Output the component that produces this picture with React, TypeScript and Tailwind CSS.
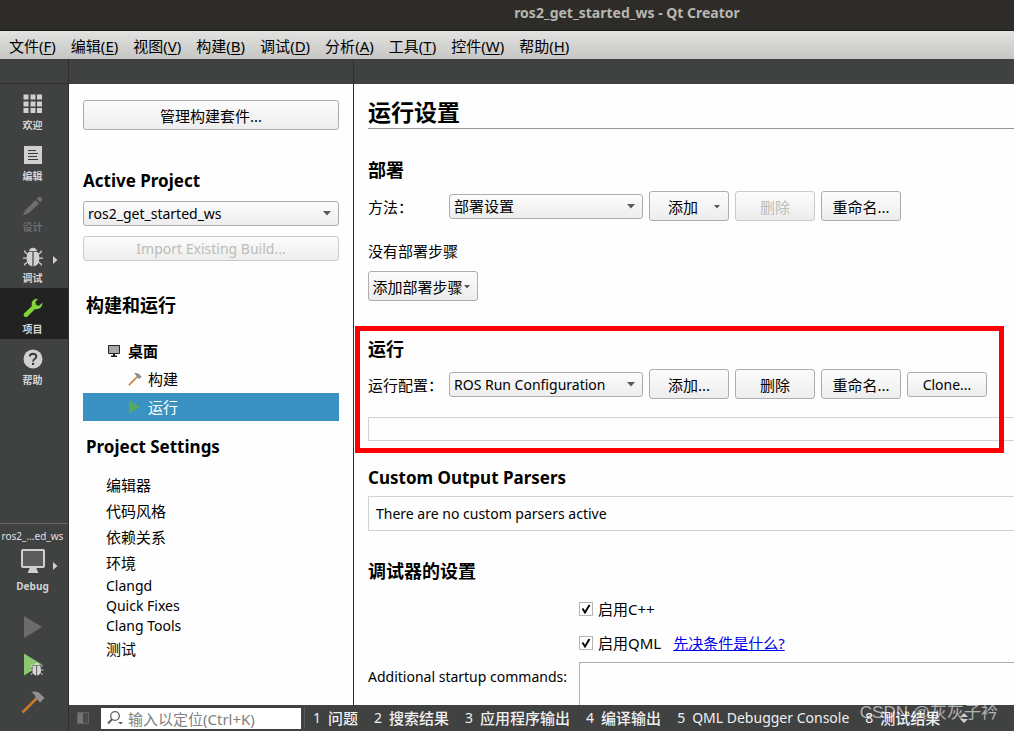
import type { ReactNode } from "react";

const MENUS: [string, string][] = [
  ["文件", "F"],
  ["编辑", "E"],
  ["视图", "V"],
  ["构建", "B"],
  ["调试", "D"],
  ["分析", "A"],
  ["工具", "T"],
  ["控件", "W"],
  ["帮助", "H"],
];

const OUTPUT_PANES: [string, string][] = [
  ["1", "问题"],
  ["2", "搜索结果"],
  ["3", "应用程序输出"],
  ["4", "编译输出"],
  ["5", "QML Debugger Console"],
  ["8", "测试结果"],
];

const CJK_SETTINGS = ["编辑器", "代码风格", "依赖关系", "环境"];
const LATIN_SETTINGS = ["Clangd", "Quick Fixes", "Clang Tools"];

function GridIcon() {
  const cells = [0.5, 7.5, 14];
  return (
    <svg width="20" height="20" viewBox="0 0 20 20" fill="#d0d0d0" aria-hidden="true">
      {cells.map((y) => cells.map((x) => <rect key={`${x}-${y}`} x={x} y={y} width="5" height="5" />))}
    </svg>
  );
}

function EditIcon() {
  return (
    <svg width="20" height="20" viewBox="0 0 20 20" aria-hidden="true">
      <rect x="1" y="1" width="18" height="18" fill="#d0d0d0" />
      <path d="M5 5.5h8M5 8.5h10M5 11.5h9M5 14.5h10" stroke="#3a3a3a" strokeWidth="1.2" />
    </svg>
  );
}

function PencilIcon() {
  return (
    <svg width="20" height="20" viewBox="0 0 20 20" fill="#6e6e6e" aria-hidden="true">
      <path d="M0 19.5l2.2-5.2L12.6 4l3.4 3.4L5.4 17.6z" />
      <path d="M13.7 2.9l1.9-1.9q1-.8 2 0l1.4 1.4q.8 1 0 2l-1.9 1.9z" />
    </svg>
  );
}

function BugShape() {
  return (
    <>
      <path d="M6 4.200Q6.500.7 10 .7t4 3.500z" />
      <path d="M9.400 5v14.500Q3.600 18 3.600 11.500 3.600 7.500 5.500 5zM10.600 5v14.500q5.800-1.500 5.800-8 0-4-1.900-6.500z" />
      <path
        d="M4.800 7.500L1.800 5V3.500M15.200 7.500l3-2.500V3.500M4 11.200H0M16 11.200h4M4.800 15l-3 2v1.500M15.200 15l3 2v1.500"
        stroke="currentColor"
        strokeWidth="1.300"
        fill="none"
      />
    </>
  );
}

function BugIcon() {
  return (
    <svg width="20" height="20" viewBox="0 0 20 20" className="text-[#d0d0d0]" fill="currentColor" aria-hidden="true">
      <BugShape />
    </svg>
  );
}

function WrenchIcon() {
  return (
    <svg width="20" height="20" viewBox="0 0 20 20" aria-hidden="true">
      <path
        d="M14.800.9Q11.300.5 9.400 3.200 8.100 5.300 9 8L1.300 15.200q-1.400 1.600 0 3.200 1.700 1.400 3.300 0L12 10.900q3 .8 5.200-.8Q19.800 8 19.200 4.800L16 7.700l-2.800-.8L12.300 4z"
        fill="#80d43c"
      />
    </svg>
  );
}

function HelpIcon() {
  return (
    <svg width="20" height="20" viewBox="0 0 20 20" aria-hidden="true">
      <circle cx="10" cy="10" r="9.500" fill="#d0d0d0" />
      <path d="M6.800 7.400Q7 4.700 10.100 4.700q3.100.1 3.200 2.700 0 1.500-1.700 2.600Q10.100 11 10.100 12.500" fill="none" stroke="#3c3c3c" strokeWidth="2" />
      <rect x="9" y="13.800" width="2.200" height="2.200" fill="#3c3c3c" />
    </svg>
  );
}

function FlyoutArrow() {
  return (
    <svg width="5" height="8" viewBox="0 0 5 8" fill="#d0d0d0" aria-hidden="true">
      <path d="M0 0l4.500 4L0 8z" />
    </svg>
  );
}

function HammerIcon({ size }: { size: number }) {
  return (
    <svg width={size} height={size} viewBox="0 0 24 24" aria-hidden="true">
      <path d="M1.500 22.500L15.500 8.500" stroke="#c87828" strokeWidth="2.600" />
      <path d="M10 2Q14 .8 18 2.500l5.500 5.500-4.500 4.500-4.500-5Q14 4 10 2z" fill="#8f9090" />
    </svg>
  );
}

function MonitorIcon() {
  return (
    <svg width="26" height="26" viewBox="0 0 26 26" aria-hidden="true">
      <rect x="2" y="2" width="22" height="17" rx="1" fill="#5b5c5c" stroke="#d0d0d0" strokeWidth="2" />
      <path d="M10 19.500h6l2.500 5.500h-11z" fill="#d0d0d0" />
    </svg>
  );
}

function DropMark() {
  return (
    <svg width="8" height="5" viewBox="0 0 8 5" fill="#5a5a5a" aria-hidden="true">
      <path d="M0 0h8L4 4.500z" />
    </svg>
  );
}

function SmallDropMark() {
  return (
    <svg width="6" height="4" viewBox="0 0 6 4" fill="#5a5a5a" aria-hidden="true">
      <path d="M0 0h6L3 3.500z" />
    </svg>
  );
}

function ModeButton({
  label,
  icon,
  active,
  disabled,
  flyout,
}: {
  label: string;
  icon: ReactNode;
  active?: boolean;
  disabled?: boolean;
  flyout?: boolean;
}) {
  return (
    <button
      type="button"
      disabled={disabled}
      className={`relative flex h-[51px] w-full flex-col items-center gap-[3px] pt-[10px] pr-[3px] text-[10px] leading-4 font-bold ${
        active ? "bg-[#222222]" : ""
      } ${disabled ? "text-[#6e6e6e]" : "text-[#d4d4d4]"}`}
    >
      {icon}
      {label}
      {flyout && (
        <span className="absolute top-[19px] right-[10px]">
          <FlyoutArrow />
        </span>
      )}
    </button>
  );
}

function PushButton({
  children,
  className,
  disabled,
}: {
  children: ReactNode;
  className: string;
  disabled?: boolean;
}) {
  return (
    <button
      type="button"
      disabled={disabled}
      className={`flex shrink-0 items-center justify-center rounded-[3px] border bg-linear-to-b from-[#fcfcfc] to-[#ededed] ${
        disabled ? "border-[#cacaca] text-[#bcbcb8]" : "border-[#adadad] text-black"
      } ${className}`}
    >
      {children}
    </button>
  );
}

function Combo({ id, label, value, className }: { id: string; label?: string; value: string; className: string }) {
  return (
    <div className={`grid shrink-0 items-center ${className}`}>
      <select
        id={id}
        aria-label={label}
        className="col-start-1 row-start-1 h-[25px] w-full appearance-none rounded-[3px] border border-[#adadad] bg-linear-to-b from-[#fcfcfc] to-[#ededed] pr-5 pl-1 text-black"
      >
        <option>{value}</option>
      </select>
      <span className="pointer-events-none col-start-1 row-start-1 justify-self-end pr-2">
        <DropMark />
      </span>
    </div>
  );
}

function Check({ id, label }: { id: string; label: string }) {
  return (
    <div className="flex items-center gap-[5px]">
      <span className="grid items-center justify-items-center">
        <input
          id={id}
          type="checkbox"
          defaultChecked
          className="peer col-start-1 row-start-1 size-[14px] appearance-none border border-[#b4b4b4] bg-white"
        />
        <svg
          width="10"
          height="10"
          viewBox="0 0 10 10"
          className="pointer-events-none invisible col-start-1 row-start-1 peer-checked:visible"
          aria-hidden="true"
        >
          <path d="M1.500 4.500L4 8.500 8.500 1" fill="none" stroke="#000" strokeWidth="1.900" />
        </svg>
      </span>
      <label htmlFor={id} className="text-[15px]">
        {label}
      </label>
    </div>
  );
}

function ModeBar() {
  return (
    <nav aria-label="Modes" className="flex w-[69px] shrink-0 flex-col border-r border-[#2e2e2e] bg-[#404141]">
      <div className="h-[25px] shrink-0 border-b border-[#303030]" />
      <ModeButton label="欢迎" icon={<GridIcon />} />
      <ModeButton label="编辑" icon={<EditIcon />} />
      <ModeButton label="设计" icon={<PencilIcon />} disabled />
      <ModeButton label="调试" icon={<BugIcon />} flyout />
      <ModeButton label="项目" icon={<WrenchIcon />} active />
      <ModeButton label="帮助" icon={<HelpIcon />} />
      <div className="mt-auto flex flex-col border-t border-[#6a6a6a] pt-1">
        <button type="button" className="relative flex flex-col items-center pr-[3px] text-[#e0e0e0]">
          <span className="text-[10px] leading-4 whitespace-nowrap">ros2_...ed_ws</span>
          <span className="mt-1">
            <MonitorIcon />
          </span>
          <span className="mt-1 text-[10px] leading-4 font-bold text-[#d0d0d0]">Debug</span>
          <span className="absolute top-[34px] right-[10px]">
            <FlyoutArrow />
          </span>
        </button>
        <div className="flex flex-col items-center gap-[14px] pt-5 pr-[3px] pb-[17px]">
          <button type="button" aria-label="Run" disabled>
            <svg width="24" height="24" viewBox="0 0 24 24" aria-hidden="true">
              <path d="M3 2l18 11L3 24z" fill="#6c6c6c" />
            </svg>
          </button>
          <button type="button" aria-label="Start debugging">
            <svg width="24" height="24" viewBox="0 0 24 24" className="text-[#d8d8d8]" fill="currentColor" aria-hidden="true">
              <path d="M3 1.500l18 11L3 23.500z" fill="#8cc870" />
              <g transform="translate(9 10.500) scale(.67)">
                <circle cx="10" cy="11" r="8" fill="#404141" />
                <BugShape />
              </g>
            </svg>
          </button>
          <button type="button" aria-label="Build">
            <HammerIcon size={24} />
          </button>
        </div>
      </div>
    </nav>
  );
}

function ProjectPane() {
  return (
    <aside className="flex w-[285px] shrink-0 flex-col overflow-hidden border-r border-[#303030] px-[14px] pt-4">
      <PushButton className="h-[30px] pt-[2px] text-[15px]">管理构建套件...</PushButton>
      <h2 className="mt-[39px] text-[17px] leading-6 font-bold">Active Project</h2>
      <Combo id="active-project" label="Active Project" value="ros2_get_started_ws" className="mt-2 text-[14px]" />
      <PushButton className="mt-[10px] h-[25px] text-[14px]" disabled>
        Import Existing Build...
      </PushButton>
      <h2 className="mt-8 pl-[3px] text-[18px] leading-6 font-bold">构建和运行</h2>
      <ul className="mt-5 text-[15px]">
        <li className="flex h-7 items-center gap-2 pl-[25px] font-bold">
          <svg width="12" height="12" viewBox="0 0 12 12" aria-hidden="true">
            <path d="M.5.500h11v8H.5z" fill="#a8a8a8" stroke="#222" />
            <path d="M5 9h2v1.500h2V12H3v-1.500h2z" fill="#222" />
          </svg>
          桌面
        </li>
        <li className="flex h-7 items-center gap-[6px] pl-[45px]">
          <HammerIcon size={14} />
          构建
        </li>
        <li className="flex h-7 items-center gap-[6px] bg-[#3a92c3] pl-[45px] text-white">
          <svg width="14" height="14" viewBox="0 0 14 14" fill="#55a865" aria-hidden="true">
            <path d="M1 0l11 7-11 7z" />
          </svg>
          运行
        </li>
      </ul>
      <h2 className="mt-[14px] pl-[3px] text-[17px] leading-6 font-bold">Project Settings</h2>
      <ul className="mt-[13px] pl-[23px]">
        {CJK_SETTINGS.map((name) => (
          <li key={name} className="text-[15px] leading-[26px]">
            {name}
          </li>
        ))}
        {LATIN_SETTINGS.map((name) => (
          <li key={name} className="text-[14px] leading-5">
            {name}
          </li>
        ))}
        <li className="text-[15px] leading-[26px]">测试</li>
      </ul>
    </aside>
  );
}

function RunSettings() {
  return (
    <main className="flex min-w-0 flex-1 flex-col overflow-hidden pt-[14px] pl-[14px]">
      <h1 className="border-b border-[#989898] pb-[2px] text-[23px] leading-7 font-bold">运行设置</h1>

      <section className="mt-[29px]">
        <h2 className="text-[18px] leading-6 font-bold">部署</h2>
        <div className="mt-[9px] flex items-center">
          <label htmlFor="deploy-method" className="w-[81px] shrink-0 pt-[2px] text-[15px]">
            方法：
          </label>
          <Combo id="deploy-method" value="部署设置" className="w-[194px] text-[15px]" />
          <div className="flex items-center gap-[6px] pl-[6px] text-[15px]">
            <PushButton className="h-[30px] w-[80px] gap-4 pt-[2px] pl-[10px]">
              添加
              <SmallDropMark />
            </PushButton>
            <PushButton className="h-[30px] w-[80px] pt-[2px]" disabled>
              删除
            </PushButton>
            <PushButton className="h-[30px] w-[80px] pt-[2px]">重命名...</PushButton>
          </div>
        </div>
        <p className="mt-[18px] text-[15px] leading-6">没有部署步骤</p>
        <PushButton className="mt-2 h-[30px] w-[110px] gap-px pt-[2px] pr-1 text-[15px]">
          添加部署步骤
          <SmallDropMark />
        </PushButton>
      </section>

      <section className="relative mt-9">
        <h2 className="text-[18px] leading-6 font-bold">运行</h2>
        <div className="mt-2 flex items-center">
          <label htmlFor="run-config" className="w-[81px] shrink-0 pt-[2px] text-[15px] whitespace-nowrap">
            运行配置：
          </label>
          <Combo id="run-config" value="ROS Run Configuration" className="w-[194px] text-[14px]" />
          <div className="flex items-center gap-[6px] pl-[6px] text-[15px]">
            <PushButton className="h-[30px] w-[80px] pt-[2px]">添加...</PushButton>
            <PushButton className="h-[30px] w-[80px] pt-[2px]">删除</PushButton>
            <PushButton className="h-[30px] w-[80px] pt-[2px]">重命名...</PushButton>
            <PushButton className="h-[25px] w-[80px] text-[14px]">Clone...</PushButton>
          </div>
        </div>
        <div className="mt-[18px] h-6 border-y border-l border-[#d2d2d2]" />
        <div className="pointer-events-none absolute -top-[11px] right-[10px] -bottom-3 -left-[13px] border-5 border-[#ff0000]" />
      </section>

      <section className="mt-[25px]">
        <h2 className="text-[17px] leading-6 font-bold">Custom Output Parsers</h2>
        <p className="mt-[6px] border-y border-l border-[#d2d2d2] px-[7px] py-[6px] text-[14px] leading-[21px]">
          There are no custom parsers active
        </p>
      </section>

      <section className="mt-7 flex min-h-0 flex-1 flex-col">
        <h2 className="text-[18px] leading-6 font-bold">调试器的设置</h2>
        <div className="mt-[14px] grid min-h-0 flex-1 grid-cols-[211px_1fr] grid-rows-[24px_24px_1fr] gap-y-[10px]">
          <div className="col-start-2 flex items-center">
            <Check id="enable-cpp" label="启用C++" />
          </div>
          <div className="col-start-2 flex items-center gap-3">
            <Check id="enable-qml" label="启用QML" />
            <a href="#prerequisites" className="text-[15px] text-[#0000ee] underline">
              先决条件是什么?
            </a>
          </div>
          <label htmlFor="startup" className="text-[14px] leading-6 whitespace-nowrap">
            Additional startup commands:
          </label>
          <textarea
            id="startup"
            className="-mt-[3px] resize-none self-stretch border-t border-l border-[#b0b0b0] bg-transparent"
          />
        </div>
      </section>
    </main>
  );
}

function StatusBar() {
  return (
    <footer className="relative flex h-[26px] shrink-0 items-center bg-[#404141] pl-2 text-[#f0f0f0]">
      <button type="button" aria-label="Toggle sidebar" className="mr-3">
        <svg width="12" height="12" viewBox="0 0 12 12" aria-hidden="true">
          <rect x=".5" y=".5" width="11" height="11" fill="#4a4a4a" stroke="#626262" />
          <rect x="1" y="1" width="5" height="10" fill="#747474" />
        </svg>
      </button>
      <div className="flex h-[21px] w-[200px] shrink-0 items-center gap-1 bg-white pl-[6px]">
        <svg width="17" height="16" viewBox="0 0 17 16" aria-hidden="true">
          <circle cx="8" cy="6" r="4.300" fill="none" stroke="#606060" strokeWidth="1.300" />
          <path d="M5 9.200L1 13.500" stroke="#606060" strokeWidth="2" />
          <path d="M11 12h5l-2.500 2.500z" fill="#606060" />
        </svg>
        <input
          type="text"
          aria-label="定位"
          placeholder="输入以定位(Ctrl+K)"
          className="h-[21px] min-w-0 flex-1 bg-transparent pt-[2px] text-[15px] text-black placeholder:text-[#808080]"
        />
      </div>
      <div className="mx-[3px] h-5 w-px bg-[#5a5a5a]" />
      <div className="flex items-center gap-4 pl-[5px]">
        {OUTPUT_PANES.map(([key, name]) => (
          <button key={key} type="button" className="flex items-center gap-[7px] leading-6 whitespace-nowrap">
            <span className="text-[14px]">{key}</span>
            <span className={key === "5" ? "text-[14px]" : "text-[15px] font-medium"}>{name}</span>
          </button>
        ))}
        <svg width="8" height="12" viewBox="0 0 8 12" fill="#d0d0d0" className="ml-1" aria-hidden="true">
          <path d="M0 5l4-4 4 4zM0 7h8l-4 4z" />
        </svg>
      </div>
      <span className="pointer-events-none absolute -top-[3px] right-4 font-['Liberation_Sans','Noto_Sans_CJK_SC',sans-serif] text-[17px] leading-[22px] whitespace-nowrap text-white/60">
        CSDN @灰灰子衿
      </span>
    </footer>
  );
}

export default function App() {
  return (
    <div className="flex h-screen flex-col overflow-hidden bg-[#fefefe] font-['Noto_Sans','Noto_Sans_CJK_SC',sans-serif] text-black">
      <header className="shrink-0">
        <div className="h-[31px] border-b border-[#1c1c1a] bg-[#2d2c29] pl-[240px] text-center text-[14px] leading-[26px] font-bold text-[#b8b6b0]">
          ros2_get_started_ws - Qt Creator
        </div>
        <div
          role="menubar"
          className="flex h-7 items-center gap-[15px] bg-linear-to-b from-[#e2e2e1] to-[#c6c6c5] pt-[2px] pl-[9px] text-[15px] leading-6"
        >
          {MENUS.map(([name, key]) => (
            <button key={key} type="button" role="menuitem" className="whitespace-nowrap">
              {name}(<span className="underline underline-offset-2">{key}</span>)
            </button>
          ))}
        </div>
      </header>
      <div className="flex min-h-0 flex-1">
        <ModeBar />
        <div className="flex min-w-0 flex-1 flex-col">
          <div className="flex h-[25px] shrink-0 bg-[#404141]">
            <div className="w-[285px] border-r border-[#303030]" />
          </div>
          <div className="flex min-h-0 flex-1">
            <ProjectPane />
            <RunSettings />
          </div>
          <StatusBar />
        </div>
      </div>
    </div>
  );
}
